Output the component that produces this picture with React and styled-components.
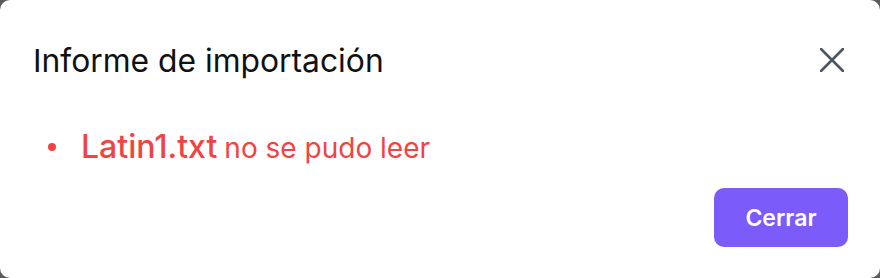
import React from "react";
import styled, { createGlobalStyle } from "styled-components";

const GlobalStyle = createGlobalStyle`
  html, body {
    margin: 0;
    padding: 0;
    background: #5b5b5b;
  }
  body {
    font-family: Inter, "Noto Sans", sans-serif;
  }
`;

const Modal = styled.div`
  width: 880px;
  height: 278px;
  box-sizing: border-box;
  background: #ffffff;
  border-radius: 10px;
  padding: 0 32px 31px 33px;
  display: flex;
  flex-direction: column;
`;

const Header = styled.div`
  display: flex;
  align-items: center;
  justify-content: space-between;
  height: 120px;
`;

const Title = styled.h2`
  margin: 0;
  font-size: 31.8px;
  font-weight: 400;
  color: #111111;
`;

const CloseButton = styled.button`
  border: none;
  background: none;
  padding: 0;
  margin-right: 4px;
  width: 24px;
  height: 24px;
  display: flex;
  cursor: pointer;
  color: #4b5563;
`;

const ErrorList = styled.ul`
  margin: 0;
  padding: 0;
  list-style: none;
  color: #ef4444;
  flex: 1;
`;

const ErrorItem = styled.li`
  display: flex;
  align-items: baseline;
  font-size: 28px;
  line-height: 54px;
  padding-left: 48px;
  position: relative;
  &::before {
    content: "";
    position: absolute;
    left: 15px;
    top: 23px;
    width: 8px;
    height: 8px;
    border-radius: 50%;
    background: currentColor;
  }
`;

const FileName = styled.span`
  font-size: 32px;
  font-weight: 500;
  margin-right: 7px;
`;

const Footer = styled.div`
  display: flex;
  justify-content: flex-end;
`;

const PrimaryButton = styled.button`
  width: 134px;
  height: 59px;
  border: none;
  border-radius: 10px;
  background: #7b5cfa;
  color: #ffffff;
  font-family: Inter, "Noto Sans", sans-serif;
  font-size: 23px;
  font-weight: 600;
  cursor: pointer;
`;

export default function App() {
  return (
    <>
      <GlobalStyle />
      <Modal>
        <Header>
          <Title>Informe de importación</Title>
          <CloseButton aria-label="Cerrar">
            <svg width="24" height="24" viewBox="0 0 24 24" fill="none">
              <path
                d="M1 1L23 23M23 1L1 23"
                stroke="currentColor"
                strokeWidth="2.6"
                strokeLinecap="round"
              />
            </svg>
          </CloseButton>
        </Header>
        <ErrorList>
          <ErrorItem>
            <FileName>Latin1.txt</FileName>no se pudo leer
          </ErrorItem>
        </ErrorList>
        <Footer>
          <PrimaryButton>Cerrar</PrimaryButton>
        </Footer>
      </Modal>
    </>
  );
}
